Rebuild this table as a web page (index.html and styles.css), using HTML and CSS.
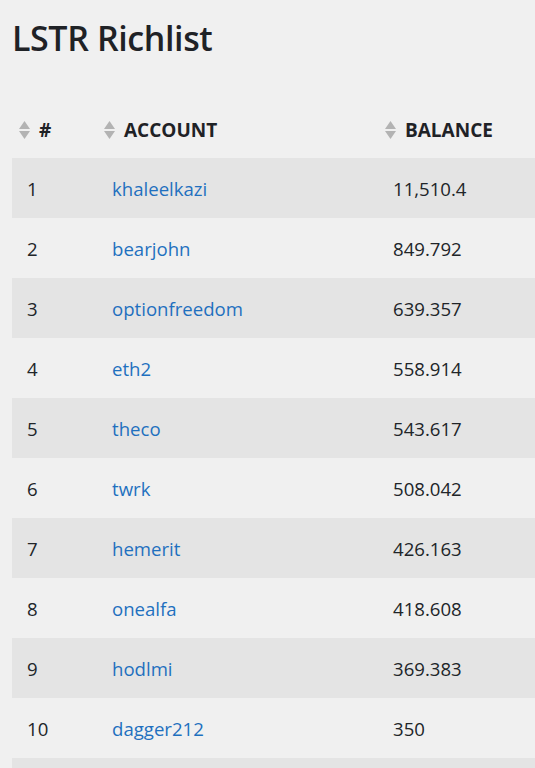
FILE: index.html
```html
<!DOCTYPE html>
<html lang="en">
<head>
<meta charset="utf-8">
<title>LSTR Richlist</title>
<link rel="stylesheet" href="styles.css">
</head>
<body>
<main class="page">
  <h1 class="title">LSTR Richlist</h1>
  <table class="richlist">
    <colgroup>
      <col class="c-rank"><col class="c-account"><col class="c-balance">
    </colgroup>
    <thead>
      <tr>
        <th><span class="th-inner"><svg class="sort" viewBox="0 0 11 18" aria-hidden="true"><path d="M5.5 0L11 8H0z"/><path d="M0 10h11L5.5 18z"/></svg>#</span></th>
        <th><span class="th-inner"><svg class="sort" viewBox="0 0 11 18" aria-hidden="true"><path d="M5.5 0L11 8H0z"/><path d="M0 10h11L5.5 18z"/></svg>Account</span></th>
        <th><span class="th-inner"><svg class="sort" viewBox="0 0 11 18" aria-hidden="true"><path d="M5.5 0L11 8H0z"/><path d="M0 10h11L5.5 18z"/></svg>Balance</span></th>
      </tr>
    </thead>
    <tbody>
      <tr><td>1</td><td><a href="#">khaleelkazi</a></td><td>11,510.4</td></tr>
      <tr><td>2</td><td><a href="#">bearjohn</a></td><td>849.792</td></tr>
      <tr><td>3</td><td><a href="#">optionfreedom</a></td><td>639.357</td></tr>
      <tr><td>4</td><td><a href="#">eth2</a></td><td>558.914</td></tr>
      <tr><td>5</td><td><a href="#">theco</a></td><td>543.617</td></tr>
      <tr><td>6</td><td><a href="#">twrk</a></td><td>508.042</td></tr>
      <tr><td>7</td><td><a href="#">hemerit</a></td><td>426.163</td></tr>
      <tr><td>8</td><td><a href="#">onealfa</a></td><td>418.608</td></tr>
      <tr><td>9</td><td><a href="#">hodlmi</a></td><td>369.383</td></tr>
      <tr><td>10</td><td><a href="#">dagger212</a></td><td>350</td></tr>
      <tr class="next"><td></td><td></td><td></td></tr>
    </tbody>
  </table>
</main>
</body>
</html>
```

FILE: styles.css
```css
html, body {
  margin: 0;
  padding: 0;
  background: #f0f0f0;
  overflow: hidden;
}

body {
  font-family: "Open Sans", "Noto Sans", sans-serif;
  color: #212529;
}

.page {
  padding: 0 0 0 12px;
}

.title {
  margin: 0;
  padding-top: 14px;
  font-size: 34px;
  font-weight: 600;
  line-height: 48px;
  letter-spacing: -0.4px;
  color: #1f2226;
}

.richlist {
  border-collapse: collapse;
  table-layout: fixed;
  width: 560px;
  margin-top: 38px;
  font-size: 18.6px;
}

.c-rank { width: 85px; }
.c-account { width: 281px; }
.c-balance { width: 194px; }

.richlist th {
  height: 58px;
  padding: 0 0 0 7px;
  text-align: left;
  font-size: 19px;
  font-weight: 700;
  text-transform: uppercase;
  vertical-align: middle;
  color: #1f2226;
}

.th-inner {
  display: flex;
  align-items: center;
  gap: 9px;
  padding-top: 1px;
}

.sort {
  width: 11px;
  height: 18px;
  fill: #b3b3b3;
  flex: none;
}

.richlist td {
  height: 60px;
  padding: 0 15px;
  vertical-align: middle;
  white-space: nowrap;
}

.richlist tbody tr:nth-child(odd) {
  background: #e4e4e4;
}

.richlist a {
  color: #1f70bf;
  text-decoration: none;
}
```
